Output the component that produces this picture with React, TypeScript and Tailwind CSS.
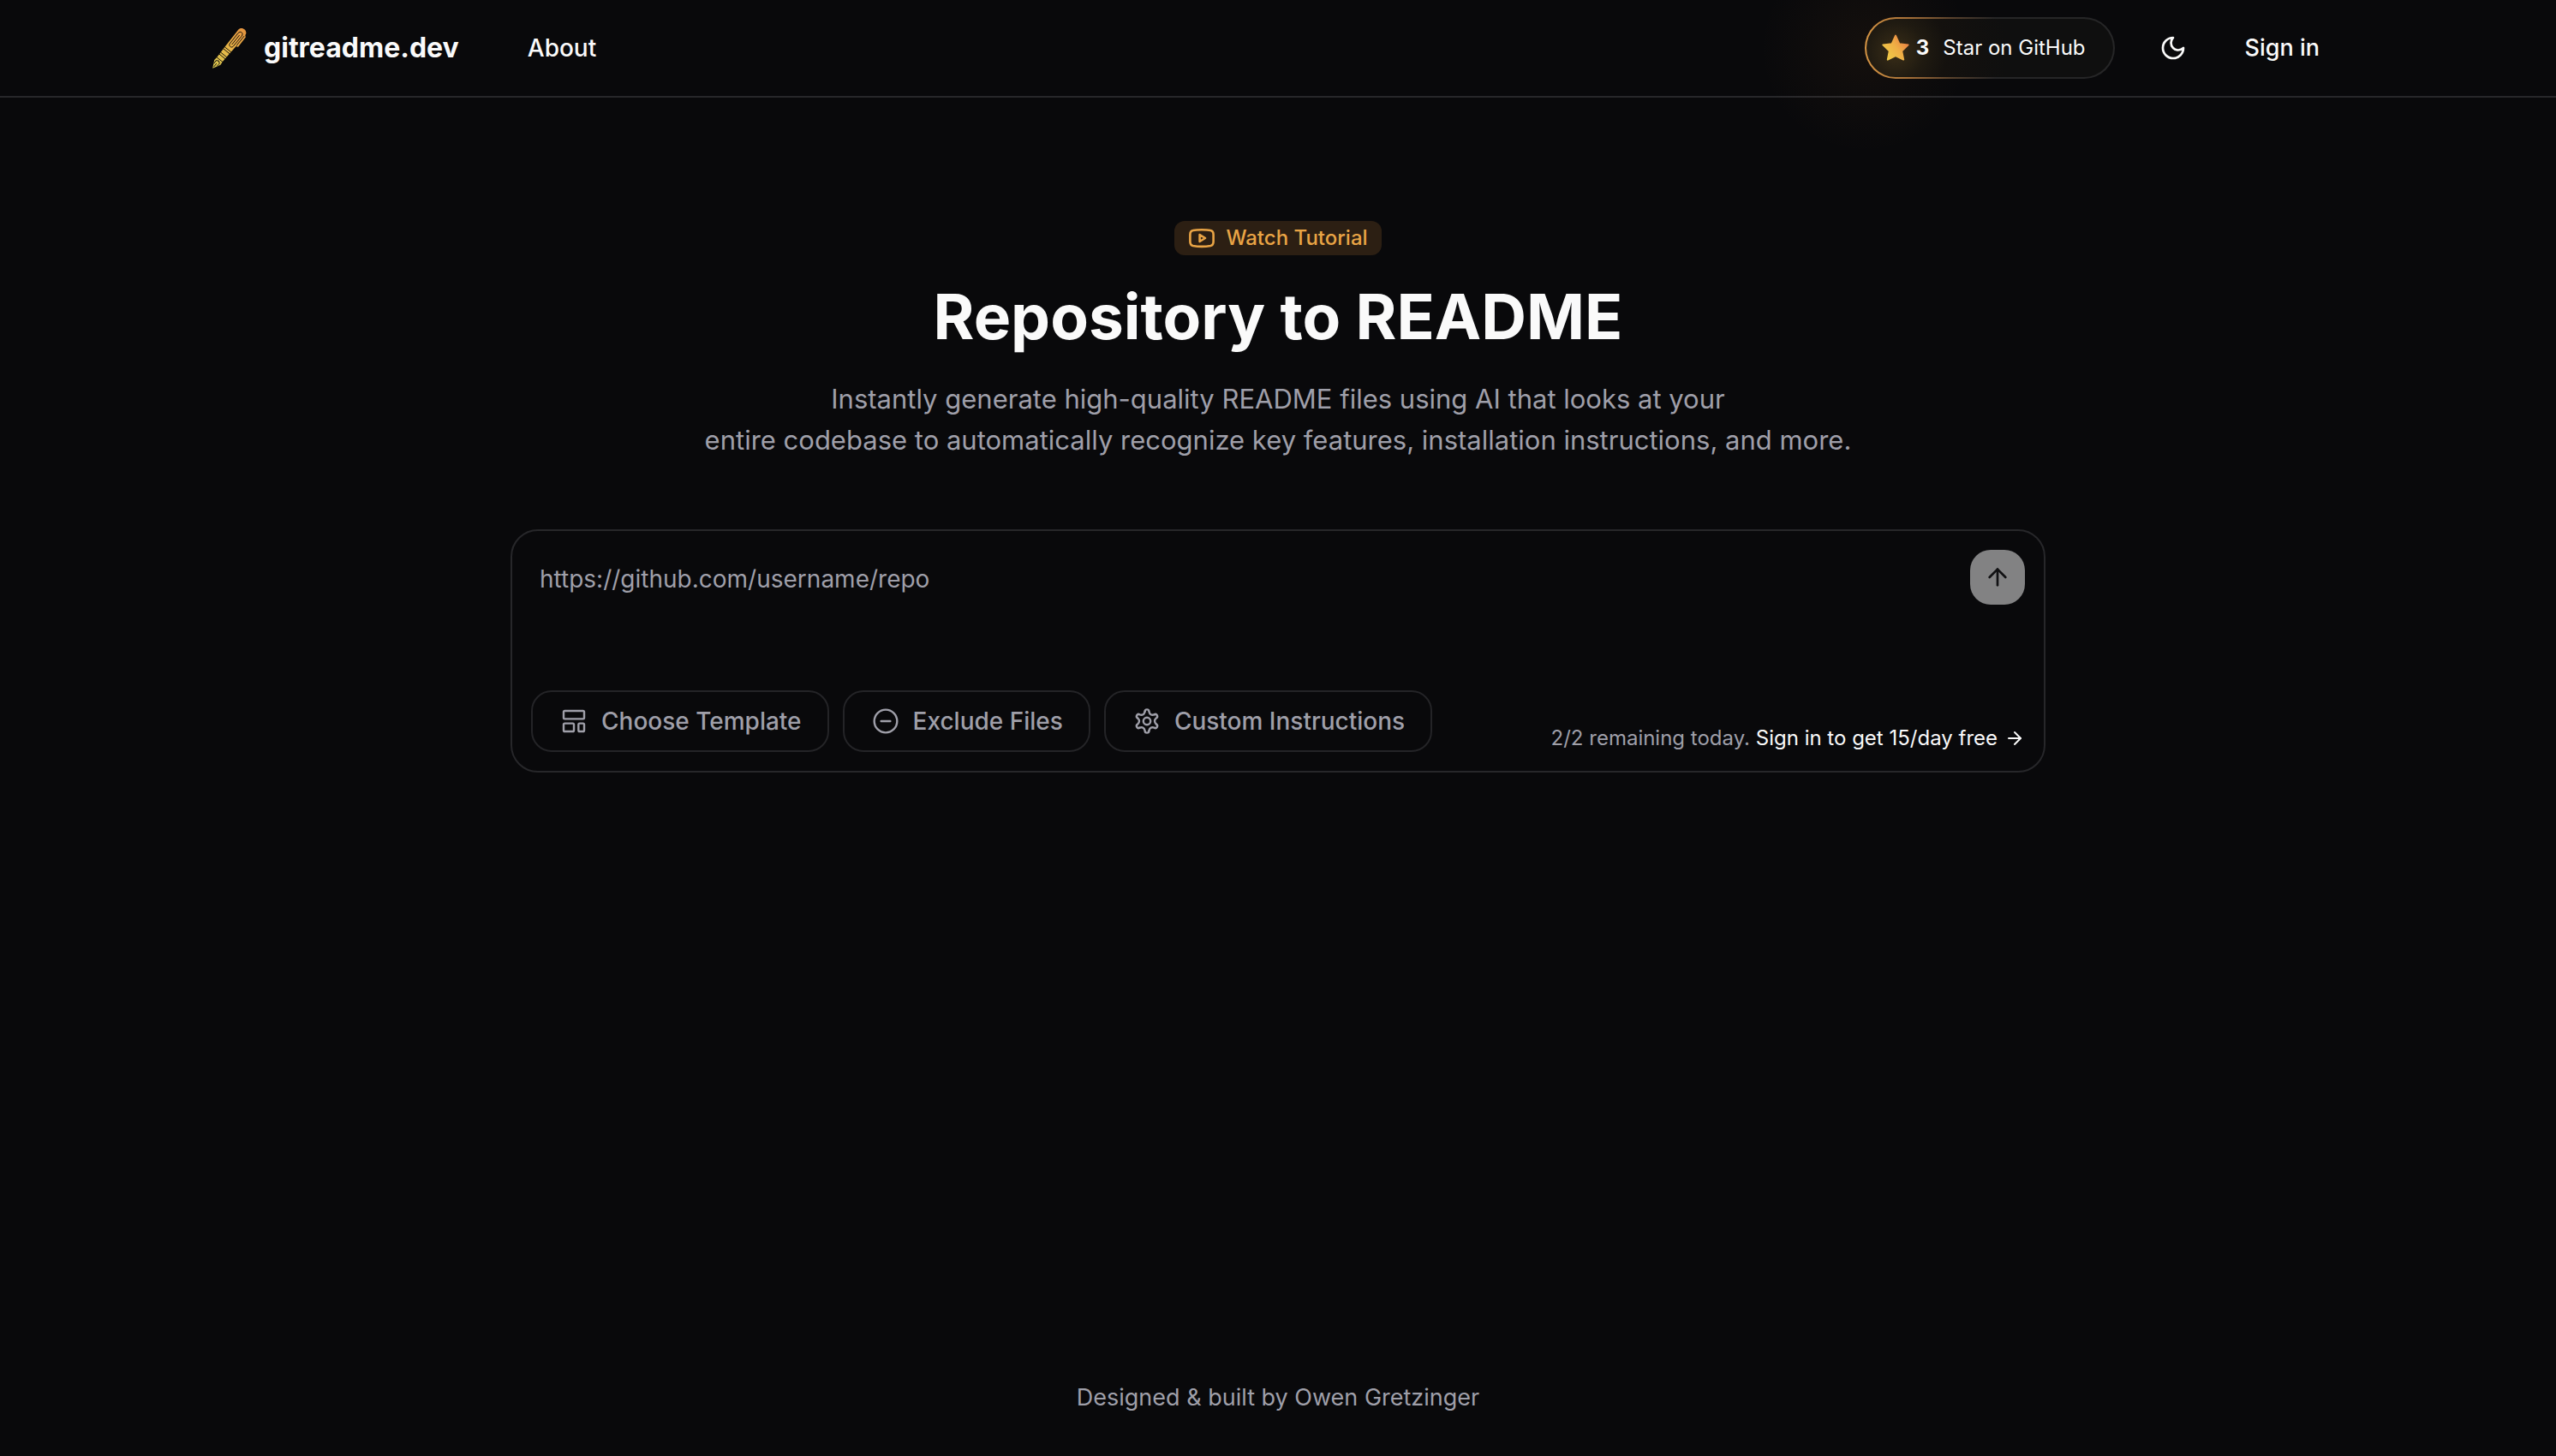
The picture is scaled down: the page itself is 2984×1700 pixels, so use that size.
import type { ReactNode } from "react";
import { ArrowRight, ArrowUp, CircleMinus, LayoutTemplate } from "lucide-react";

function PenLogo() {
  return (
    <svg viewBox="0 0 48 48" className="size-12" aria-hidden="true">
      <defs>
        <linearGradient id="pen" gradientUnits="userSpaceOnUse" x1="0" y1="0" x2="0" y2="-57">
          <stop offset="0" stopColor="#d9c850" />
          <stop offset="0.5" stopColor="#e6b447" />
          <stop offset="1" stopColor="#e4923f" />
        </linearGradient>
      </defs>
      <g transform="translate(4.2 47.8) rotate(39) scale(1.05)">
        <path
          fill="url(#pen)"
          d="M0 0 L-4.4 -8.5 L-4 -13 L-4.4 -27 L-4.8 -51 C-4.8 -57.5 5 -57.5 5 -51.5 L6.8 -50 L7 -36.5 L5.4 -35.5 L5 -38 L4.4 -27 L4 -13 L4.4 -8.5 Z"
        />
        <g fill="none" stroke="#09090b" strokeWidth="0.8">
          <path d="M-4.6 -12.5 H4.6 M-4.6 -17 H4.6 M-4.6 -19.5 H4.6 M-4.6 -24.5 H4.6 M-4.6 -27 H4.6" />
          <path d="M0 -2 V-7 M-2.2 -5 L-2.6 -9 L0 -10.8 L2.6 -9 L2.2 -5" />
          <path d="M-2.6 -48 C-2.6 -52.5 2.6 -52.5 2.6 -48 L2.4 -33 C2 -30.5 -1.8 -30.5 -2.4 -33 Z" />
          <path d="M0 -47.5 V-34 M4.7 -50 V-37" />
        </g>
      </g>
    </svg>
  );
}

function StarIcon() {
  return (
    <svg viewBox="0 0 32 32" className="size-8" aria-hidden="true">
      <defs>
        <linearGradient id="star" x1="0.1" y1="0.9" x2="0.9" y2="0.3">
          <stop offset="0" stopColor="#efcb47" />
          <stop offset="0.6" stopColor="#efae45" />
          <stop offset="1" stopColor="#ea8843" />
        </linearGradient>
      </defs>
      <path
        fill="url(#star)"
        stroke="url(#star)"
        strokeWidth="2"
        strokeLinejoin="round"
        d="M16 1.6 L20.3 11.2 L30.6 12.4 L23.2 19.6 L25.2 29.6 L16 25 L6.8 29.6 L8.8 19.6 L1.4 12.4 L11.7 11.2 Z"
      />
    </svg>
  );
}

function MoonIcon() {
  return (
    <svg
      viewBox="0 0 24 24"
      className="size-8"
      fill="none"
      stroke="currentColor"
      strokeWidth="2"
      strokeLinecap="round"
      strokeLinejoin="round"
      aria-hidden="true"
    >
      <path d="M12 3a6 6 0 0 0 9 9 9 9 0 1 1-9-9Z" />
    </svg>
  );
}

function VideoIcon() {
  return (
    <svg
      viewBox="0 0 32 32"
      className="size-8"
      fill="none"
      stroke="currentColor"
      strokeWidth="2.6"
      strokeLinejoin="round"
      aria-hidden="true"
    >
      <path d="M16 6.2 C20 6.2 23.5 6.4 26.3 7 C29 7.5 29.6 9.4 29.6 12 V20 C29.6 22.8 29 24.4 26.3 25 C20 26.1 12 26.1 5.7 25 C3 24.4 2.4 22.8 2.4 20 V12 C2.4 9.4 3 7.5 5.7 7 C8.5 6.4 12 6.2 16 6.2 Z" />
      <path d="M13.6 12 L20 16 L13.6 20 Z" />
    </svg>
  );
}

const GEAR_TURNS = [0, 60, 120, 180, 240, 300];

function GearIcon() {
  return (
    <svg
      viewBox="-16 -16 32 32"
      className="size-8"
      fill="none"
      stroke="currentColor"
      strokeWidth="2.4"
      strokeLinecap="round"
      aria-hidden="true"
    >
      {GEAR_TURNS.map((turn) => (
        <path
          key={turn}
          transform={`rotate(${turn})`}
          d="M-2.4 -11.2 A2.4 2.4 0 0 1 2.4 -11.2 Q3.55 -6.15 8.5 -7.68"
        />
      ))}
      <circle r="4.2" />
    </svg>
  );
}

function OptionButton({ icon, children }: { icon: ReactNode; children: ReactNode }) {
  return (
    <button
      type="button"
      className="flex h-[72px] items-center gap-4 rounded-3xl border-2 border-[#242427] pr-[30px] pl-8 text-[28px] leading-10 font-medium text-zinc-400"
    >
      {icon}
      {children}
    </button>
  );
}

export default function App() {
  return (
    <div className="flex min-h-screen flex-col bg-[#09090b] font-['Inter','Liberation_Sans',sans-serif] text-zinc-50">
      <header className="border-b-2 border-zinc-800">
        <div className="mx-auto flex h-28 w-full max-w-[2560px] items-center px-8">
          <a href="#" className="flex items-center gap-4 text-[32px] leading-10 font-bold">
            <PenLogo />
            gitreadme.dev
          </a>
          <nav className="ml-20 text-[28px] leading-10 font-medium">
            <a href="#about">About</a>
          </nav>
          <div className="ml-auto flex items-center">
            <a
              href="#github"
              className="relative flex h-[72px] items-center rounded-full bg-[linear-gradient(90deg,#d69645_0%,#a67038_17%,#5b432d_34%,#262627_52%)] p-[2px] text-2xl leading-8"
            >
              <span
                className="pointer-events-none absolute top-1/2 left-0 size-64 -translate-x-1/2 -translate-y-1/2 rounded-full bg-[radial-gradient(circle,rgba(234,140,50,0.05)_0%,rgba(234,140,50,0.02)_40%,transparent_68%)]"
                aria-hidden="true"
              />
              <span className="relative flex h-full items-center rounded-full bg-[radial-gradient(circle_at_34px_38px,#3a2e18_0px,#1f1a11_34px,#14110e_60px,#0f0f0f_130px)] pr-8 pl-[18px]">
                <StarIcon />
                <span className="ml-2 font-bold">3</span>
                <span className="ml-4">Star on GitHub</span>
              </span>
            </a>
            <button type="button" aria-label="Toggle theme" className="ml-8 flex size-[72px] items-center justify-center">
              <MoonIcon />
            </button>
            <a href="#sign-in" className="ml-4 px-8 text-[27px] leading-10 font-medium">
              Sign in
            </a>
          </div>
        </div>
      </header>

      <main className="flex flex-1 flex-col items-center px-8 pt-36">
        <a
          href="#tutorial"
          className="flex h-10 items-center gap-3 rounded-xl bg-[#2c1f13] px-4 text-2xl leading-8 font-medium text-[#e9a445]"
        >
          <VideoIcon />
          Watch Tutorial
        </a>
        <h1 className="mt-8 text-center text-[73px] leading-[80px] font-bold">Repository to README</h1>
        <p className="mt-8 text-center text-[31px] leading-[48px] text-zinc-400">
          Instantly generate high-quality README files using AI that looks at your
          <br />
          entire codebase to automatically recognize key features, installation instructions, and more.
        </p>

        <form
          className="mt-20 flex w-full max-w-[1792px] flex-col justify-between gap-24 rounded-4xl border-2 border-zinc-800 p-[22px]"
          onSubmit={(e) => e.preventDefault()}
        >
          <div className="flex items-start gap-4">
            <input
              type="text"
              aria-label="Repository URL"
              placeholder="https://github.com/username/repo"
              className="h-[68px] flex-1 bg-transparent px-2.5 text-[28px] leading-10 outline-none placeholder:text-zinc-400"
            />
            <button
              type="submit"
              aria-label="Generate"
              className="flex size-16 items-center justify-center rounded-3xl bg-[#828283] text-[#111113]"
            >
              <ArrowUp className="size-8" />
            </button>
          </div>
          <div className="flex items-end justify-between">
            <div className="flex gap-4">
              <OptionButton icon={<LayoutTemplate className="size-8" strokeWidth={1.8} />}>Choose Template</OptionButton>
              <OptionButton icon={<CircleMinus className="size-8" strokeWidth={1.8} />}>Exclude Files</OptionButton>
              <OptionButton icon={<GearIcon />}>Custom Instructions</OptionButton>
            </div>
            <p className="flex items-center text-2xl leading-8 text-zinc-400">
              2/2 remaining today.&nbsp;
              <a href="#sign-in" className="flex items-center gap-2 text-zinc-50">
                Sign in to get 15/day free
                <ArrowRight className="size-6" />
              </a>
            </p>
          </div>
        </form>
      </main>

      <footer className="py-12 text-center text-[27px] leading-10 text-zinc-400">
        Designed &amp; built by <a href="#owen">Owen Gretzinger</a>
      </footer>
    </div>
  );
}
